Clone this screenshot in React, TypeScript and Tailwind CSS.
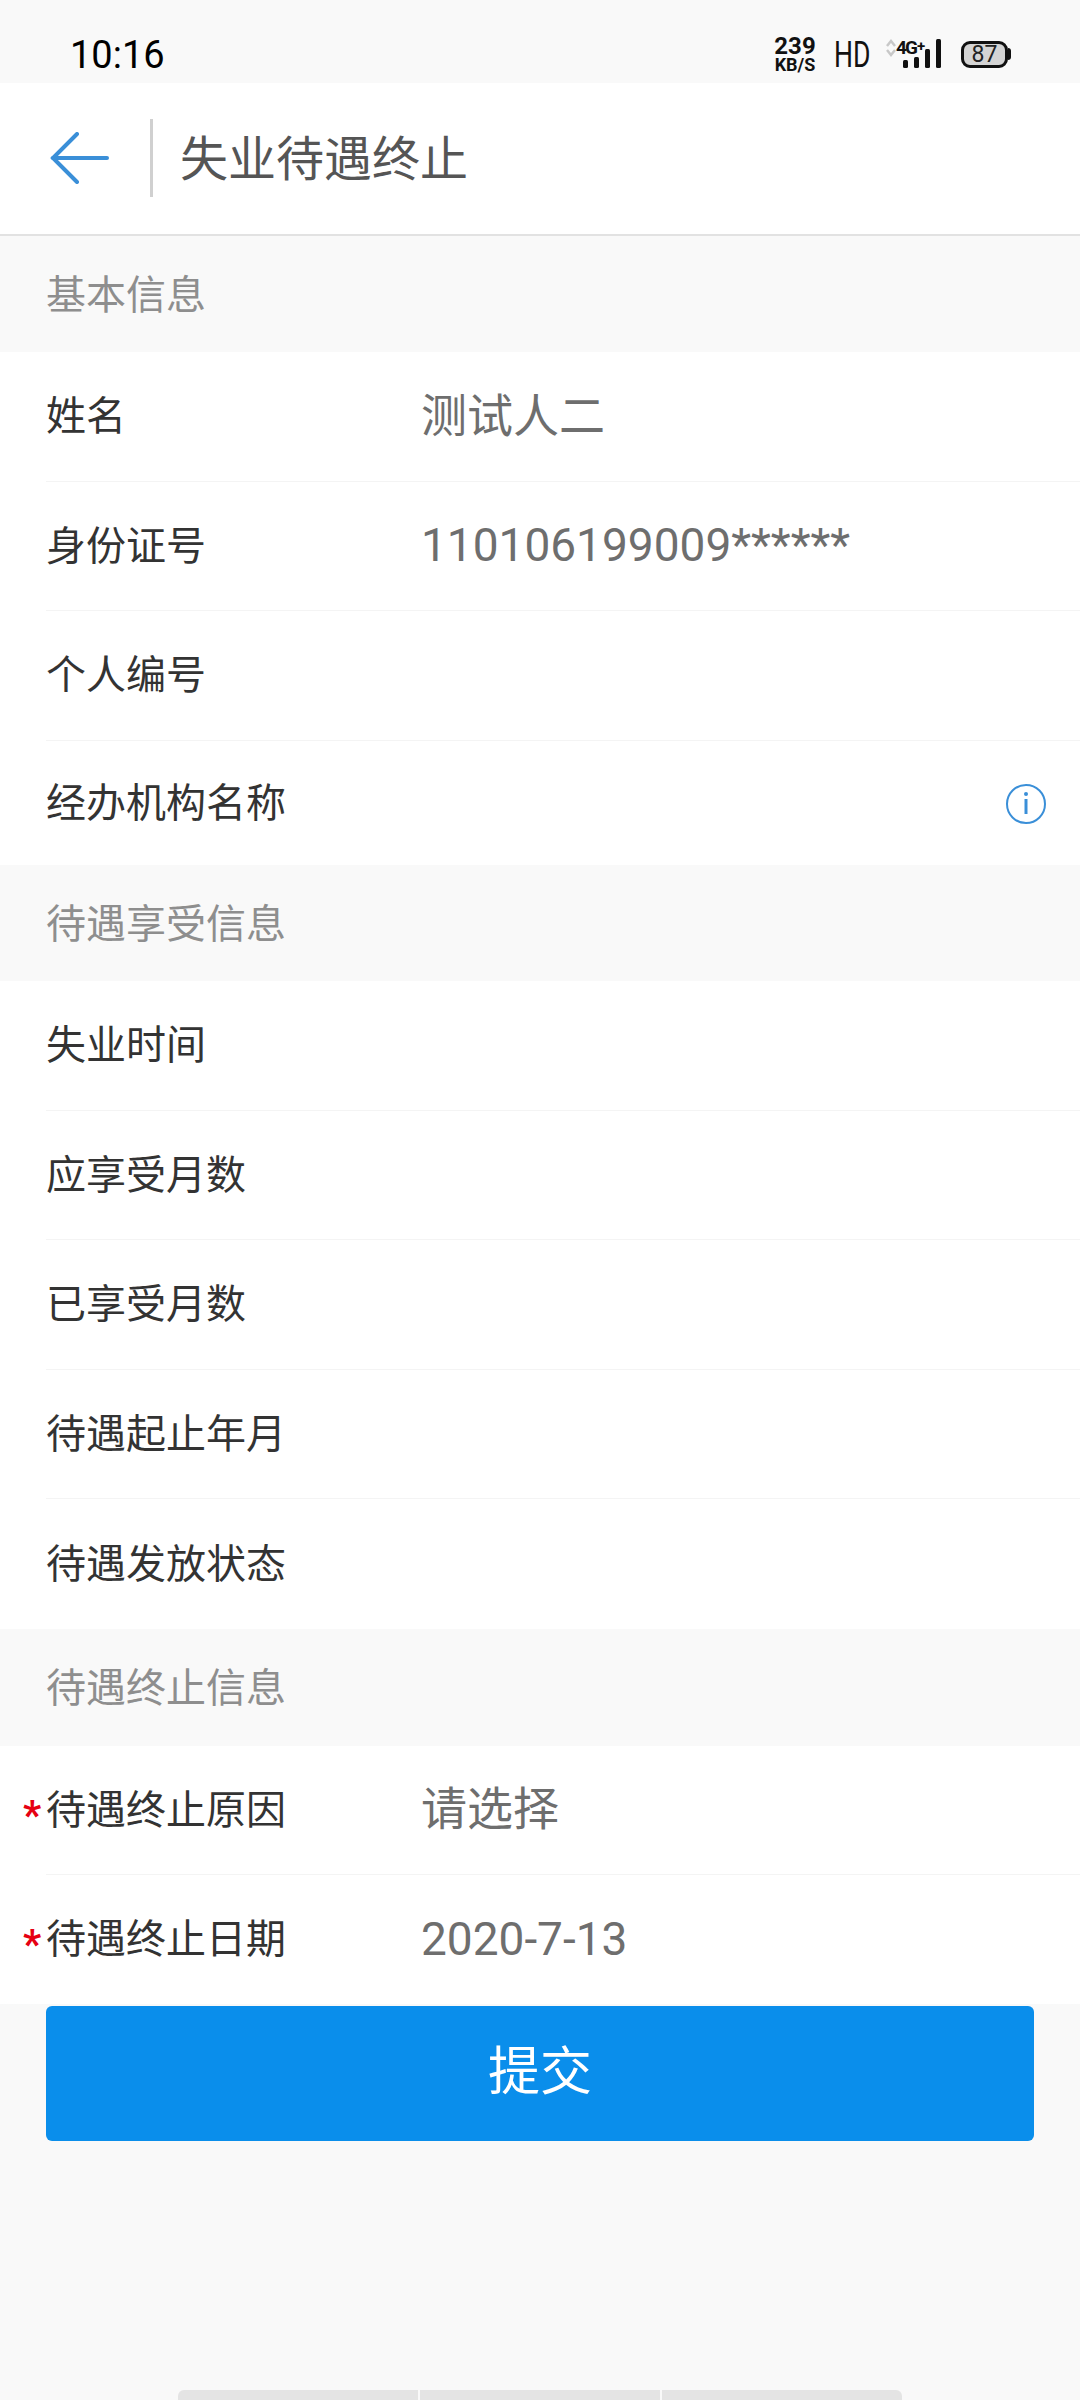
import React from 'react';

const FONT = 'font-["Roboto","Noto_Sans_CJK_SC",sans-serif]';

const SectionTitle = ({ title, height = 'h-[116px]' }: { title: string; height?: string }) => (
  <div className={`${height} flex items-center pl-[46px] pt-[3px] text-[40px] text-[#8e8e8e]`}>{title}</div>
);

const Row = ({
  label,
  value,
  required,
  last,
  height = 'h-[129.5px]',
  children,
}: {
  label: string;
  value?: string;
  required?: boolean;
  last?: boolean;
  height?: string;
  children?: React.ReactNode;
}) => (
  <div className={`relative pl-[46px] ${height}`}>
    {required && (
      <span className="absolute left-[23px] top-[46px] text-[40px] leading-[48px] font-bold text-[#e60012]">*</span>
    )}
    <div className={`h-full flex items-center pt-[2px] ${last ? '' : 'border-b border-[#f4f4f4]'}`}>
      <span className="w-[375px] shrink-0 text-[40px] text-[#333333]">{label}</span>
      {value && <span className="-mt-[2px] text-[46px] text-[#6e6e6e]">{value}</span>}
      {children}
    </div>
  </div>
);

const StatusBar = () => (
  <div className="h-[83px] flex items-center pl-[70px] pr-[69px] pt-[25px] bg-[#f9f9f9]">
    <span className="mt-[2px] text-[38px] leading-none text-black">10:16</span>
    <div className="ml-auto flex items-center">
      <div className="w-[40px] flex flex-col items-center font-bold text-[#111111] mr-[19px]">
        <span className="text-[24px] leading-[21px]">239</span>
        <span className="text-[18px] leading-[16px] whitespace-nowrap">KB/S</span>
      </div>
      <div className="w-[36px] flex justify-center mr-[16px]">
        <span className="text-[37px] leading-none text-[#111111] scale-x-[0.72]">HD</span>
      </div>
      <svg width="56" height="42" viewBox="0 -6 56 42" className="-my-[6px] mr-[19px]">
        <path d="M1 7l4-5 4 5M1 11l4 5 4-5" stroke="#c8c8c8" strokeWidth="2.5" fill="none" />
        <text x="10" y="15" fontSize="19" fontWeight="700" fill="#111111" fontFamily="Roboto" textLength="22">4G</text>
        <text x="31" y="12" fontSize="15" fontWeight="700" fill="#111111" fontFamily="Roboto">+</text>
        <rect x="17" y="21" width="5" height="8" rx="1.5" fill="#111111" />
        <rect x="28" y="18" width="5" height="11" rx="1.5" fill="#111111" />
        <rect x="39" y="10" width="5" height="19" rx="1.5" fill="#111111" />
        <rect x="50" y="0" width="5" height="29" rx="1.5" fill="#111111" />
      </svg>
      <div className="flex items-center">
        <div className="w-[47px] h-[27px] rounded-[9px] border-[3px] border-[#111111] bg-[#d4d4d4] flex items-center justify-center text-[23px] leading-none text-[#222222]">
          87
        </div>
        <div className="w-[3px] h-[12px] bg-[#111111] rounded-r-[3px]" />
      </div>
    </div>
  </div>
);

export default function App() {
  return (
    <div className={`relative w-[1080px] h-[2400px] overflow-hidden bg-[#f9f9f9] ${FONT}`}>
      <StatusBar />

      {/* Header */}
      <header className="h-[153px] flex items-center bg-white border-b-2 border-[#e2e2e2] pb-[2px]">
        <div className="w-[150px] flex items-center pl-[50px]">
          <svg width="60" height="52" viewBox="0 0 60 52" fill="none" stroke="#3a8fd8" strokeWidth="4" strokeLinecap="round">
            <path d="M27 2L3 26l24 24" />
            <path d="M3 26h54" />
          </svg>
        </div>
        <div className="w-[3px] h-[78px] bg-[#d0d0d0]" />
        <span className="ml-[27px] mt-[4px] text-[48px] text-[#555555]">失业待遇终止</span>
      </header>

      <SectionTitle title="基本信息" />
      <div className="bg-white">
        <Row label="姓名" value="测试人二" />
        <Row label="身份证号" value="110106199009******" />
        <Row label="个人编号" />
        <Row label="经办机构名称" last height="h-[124.5px]">
          <svg width="42" height="42" viewBox="0 0 42 42" fill="none" className="ml-auto mr-[33px]">
            <circle cx="21" cy="21" r="19" stroke="#3a8fd8" strokeWidth="2" />
            <circle cx="21" cy="11" r="2" fill="#3a8fd8" />
            <path d="M21 16v15" stroke="#3a8fd8" strokeWidth="3" />
          </svg>
        </Row>
      </div>

      <SectionTitle title="待遇享受信息" />
      <div className="bg-white">
        <Row label="失业时间" />
        <Row label="应享受月数" />
        <Row label="已享受月数" />
        <Row label="待遇起止年月" />
        <Row label="待遇发放状态" last />
      </div>

      <SectionTitle title="待遇终止信息" height="h-[117px]" />
      <div className="bg-white">
        <Row label="待遇终止原因" value="请选择" required height="h-[129px]" />
        <Row label="待遇终止日期" value="2020-7-13" required last height="h-[129px]" />
      </div>

      <div className="px-[46px] pt-[2px]">
        <button className="w-full h-[135px] rounded-[6px] bg-[#0a8eeb] text-white text-[52px]">提交</button>
      </div>

      {/* Bottom handle */}
      <div className="absolute bottom-0 left-[178px] w-[724px] h-[10px] flex gap-[2px]">
        <div className="flex-1 bg-[#e4e4e4] rounded-tl-[6px]" />
        <div className="flex-1 bg-[#e4e4e4]" />
        <div className="flex-1 bg-[#e4e4e4] rounded-tr-[6px]" />
      </div>
    </div>
  );
}
